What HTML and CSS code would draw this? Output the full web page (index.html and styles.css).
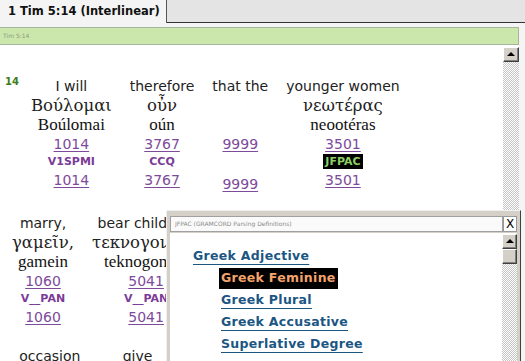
FILE: index.html
```html
<!DOCTYPE html>
<html lang="en">
<head>
  <meta charset="UTF-8" />
  <title>1 Tim 5:14 (Interlinear)</title>
  <link rel="stylesheet" href="styles.css">
</head>
<body>
  <div class="tabs">
    <div class="tab">1 Tim 5:14 (Interlinear)</div>
    <div class="tab-rest"></div>
  </div>

  <div class="pane">
    <div class="crumb">Tim 5:14</div>
    <div class="view">
      <div class="text">
        <!-- first line of the verse -->
        <div class="verse">
          <span class="vnum">14</span>
          <div class="word">
            <div class="en">I will</div>
            <div class="gk">Βούλομαι</div>
            <div class="tr">Boúlomai</div>
            <a class="num" href="#">1014</a>
            <div class="code">V1SPMI</div>
            <a class="num" href="#">1014</a>
          </div>
          <div class="word">
            <div class="en">therefore</div>
            <div class="gk">οὖν</div>
            <div class="tr">oún</div>
            <a class="num" href="#">3767</a>
            <div class="code">CCQ</div>
            <a class="num" href="#">3767</a>
          </div>
          <div class="word">
            <div class="en">that the</div>
            <div class="gk">&nbsp;</div>
            <div class="tr">&nbsp;</div>
            <a class="num" href="#">9999</a>
            <div class="code empty">&nbsp;</div>
            <a class="num" href="#">9999</a>
          </div>
          <div class="word">
            <div class="en">younger women</div>
            <div class="gk">νεωτέρας</div>
            <div class="tr">neootéras</div>
            <a class="num" href="#">3501</a>
            <div class="code"><span class="picked">JFPAC</span></div>
            <a class="num" href="#">3501</a>
          </div>
        </div>

        <div class="verse">
          <div class="word">
            <div class="en">marry,</div>
            <div class="gk">γαμεῖν,</div>
            <div class="tr">gamein</div>
            <a class="num" href="#">1060</a>
            <div class="code">V__PAN</div>
            <a class="num" href="#">1060</a>
          </div>
          <div class="word">
            <div class="en">bear children,</div>
            <div class="gk">τεκνογονεῖν,</div>
            <div class="tr">teknogonein</div>
            <a class="num" href="#">5041</a>
            <div class="code">V__PAN</div>
            <a class="num" href="#">5041</a>
          </div>
        </div>

        <div class="verse">
          <div class="word">
            <div class="en">occasion</div>
            <div class="gk">ἀφορμὴν</div>
            <div class="tr">aphormeen</div>
          </div>
          <div class="word">
            <div class="en">give</div>
            <div class="gk">διδόναι</div>
            <div class="tr">didónai</div>
          </div>
        </div>
      </div>
      <div class="vscroll">
        <div class="sbtn"><span class="arrow"></span></div>
      </div>
    </div>
  </div>

  <!-- parsing popup -->
  <div class="popup">
    <div class="pop-title">
      <div class="pop-caption">JFPAC (GRAMCORD Parsing Definitions)</div>
      <div class="pop-close">X</div>
    </div>
    <div class="pop-body">
      <div class="pop-list">
        <a class="def" href="#">Greek Adjective</a>
        <a class="def sub current" href="#">Greek Feminine</a>
        <a class="def sub" href="#">Greek Plural</a>
        <a class="def sub" href="#">Greek Accusative</a>
        <a class="def sub" href="#">Superlative Degree</a>
      </div>
      <div class="vscroll small">
        <div class="sbtn"><span class="arrow"></span></div>
        <div class="sbtn thumb"></div>
      </div>
    </div>
  </div>
</body>
</html>
```

FILE: styles.css
```css
* {
  box-sizing: border-box;
}

body {
  margin: 0;
  width: 525px;
  height: 361px;
  overflow: hidden;
  position: relative;
  background: #f4f4f4;
  font-family: "DejaVu Sans", sans-serif;
  color: #1a1a1a;
}

.tabs {
  display: flex;
  height: 23px;
}

.tab {
  width: 167px;
  padding: 4px 0 0 8px;
  font-size: 11.5px;
  font-weight: bold;
  color: #111;
  background: #f4f4f4;
  border-right: 1px solid #555;
}

.tab-rest {
  flex: 1;
  background: #e4e4e4;
  border-bottom: 1px solid #333;
}

.pane {
  margin-top: 4px;
  width: 519px;
  height: 334px;
  display: flex;
  flex-direction: column;
  background: #fff;
}

.crumb {
  height: 18px;
  padding-left: 3px;
  font-size: 6px;
  line-height: 16px;
  color: #8c9a84;
  background: #cbe7ab;
  border: 1px solid #a6b59c;
  border-left: none;
}

.view {
  flex: 1;
  display: flex;
  min-height: 0;
}

.text {
  flex: 1;
  padding: 31px 0 0 3px;
  overflow: hidden;
}

.verse {
  display: flex;
  align-items: flex-start;
  flex-wrap: nowrap;
  margin-bottom: 17px;
}

.vnum {
  margin: 0 3px 0 2px;
  font-size: 10px;
  font-weight: bold;
  color: #3c7d1c;
}

.word {
  display: flex;
  flex-direction: column;
  align-items: center;
  padding: 0 9px;
  white-space: nowrap;
  flex-shrink: 0;
}

.en {
  height: 20px;
  line-height: 20px;
  font-size: 14px;
  color: #222;
}

.gk {
  height: 19px;
  line-height: 19px;
  font-family: "DejaVu Serif", serif;
  font-size: 16.5px;
  color: #222;
}

.tr {
  height: 20px;
  line-height: 20px;
  font-family: "Liberation Serif", serif;
  font-size: 17px;
  color: #111;
}

.num {
  height: 18px;
  line-height: 18px;
  font-size: 14px;
  color: #7d4a9c;
  text-decoration: underline;
  text-underline-offset: 2px;
}

.code + .num {
  height: 22px;
  line-height: 20px;
}

.code {
  height: 17px;
  line-height: 17px;
  font-size: 11px;
  font-weight: bold;
  color: #7a3c98;
}

.code.empty {
  height: 21px;
}

.picked {
  padding: 1px 2px;
  background: #000;
  color: #8ccf64;
}

/* old style scrollbars */
.vscroll {
  width: 16px;
  margin-top: 2px;
  background-color: #fff;
  background-image: repeating-conic-gradient(#c4c4c4 0% 25%, #fff 0% 50%);
  background-size: 2px 2px;
}

.sbtn {
  height: 15px;
  display: flex;
  align-items: center;
  justify-content: center;
  background: #d4d0c8;
  border: 1px solid;
  border-color: #fff #404040 #404040 #fff;
  box-shadow: inset -1px -1px 0 #808080;
}

.arrow {
  width: 0;
  height: 0;
  border-left: 4px solid transparent;
  border-right: 4px solid transparent;
  border-bottom: 4px solid #000;
  margin-bottom: 1px;
}

.popup {
  position: absolute;
  left: 166px;
  top: 210px;
  width: 355px;
  height: 160px;
  padding: 5px 3px 0 3px;
  background: #d4d0c8;
  border: 1px solid;
  border-color: #f0f0f0 #404040 #404040 #f0f0f0;
  display: flex;
  flex-direction: column;
}

.pop-title {
  display: flex;
  height: 16px;
}

.pop-caption {
  flex: 1;
  padding-left: 4px;
  font-size: 6px;
  line-height: 14px;
  color: #8a8a8a;
  background: #fafafa;
  border: 1px solid #a0a0a0;
}

.pop-close {
  width: 14px;
  font-size: 12px;
  line-height: 14px;
  text-align: center;
  color: #000;
  background: #fff;
  border: 1px solid #999;
}

.pop-body {
  flex: 1;
  display: flex;
  margin-top: 1px;
  background: #fff;
}

.pop-list {
  flex: 1;
  padding: 13px 0 0 23px;
  display: flex;
  flex-direction: column;
  align-items: flex-start;
}

.def {
  height: 22px;
  line-height: 20px;
  font-size: 12.5px;
  font-weight: bold;
  letter-spacing: 0.3px;
  color: #1b5683;
  text-decoration: underline;
  text-underline-offset: 4px;
}

.def.sub {
  margin-left: 28px;
}

.def.current {
  padding: 0 2px;
  margin-left: 26px;
  height: 21px;
  margin-bottom: 1px;
  background: #000;
  color: #f4a36c;
  text-decoration: none;
}

.vscroll.small {
  width: 15px;
  margin-top: 1px;
}
```
